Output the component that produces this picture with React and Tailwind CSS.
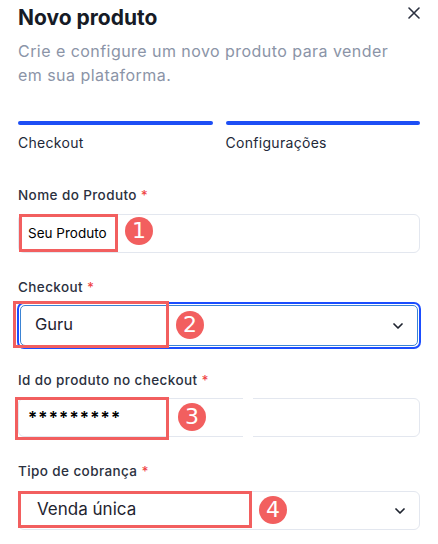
import { ChevronDown } from "lucide-react";

const FONT = { fontFamily: "Inter, 'Noto Sans', sans-serif" };

function Badge({ n, className }) {
  return (
    <div
      className={`absolute w-[28px] h-[28px] rounded-full bg-[#f25f5f] text-white flex items-center justify-center text-[22px] leading-none ${className}`}
      style={{ fontFamily: "'DejaVu Sans', sans-serif" }}
    >
      {n}
    </div>
  );
}

function Label({ children, className = "" }) {
  return (
    <div className={`text-[13.5px] font-medium text-[#2b3140] leading-[20px] tracking-[0.4px] ${className}`}>
      {children} <span className="text-[#ef4444]">*</span>
    </div>
  );
}

function Chevron() {
  return <ChevronDown className="w-[16px] h-[16px] text-[#1f2430]" strokeWidth={2.6} />;
}

export default function App() {
  return (
    <div className="w-[438px] h-[544px] overflow-hidden bg-white px-[18px]" style={FONT}>
      {/* Header */}
      <div className="flex items-start justify-between pt-[4px]">
        <h2 className="text-[21px] font-bold text-[#161b26] leading-[28px]">Novo produto</h2>
        <svg width="12" height="12" viewBox="0 0 12 12" className="mt-[3px]" fill="none">
          <path d="M1 1l10 10M11 1L1 11" stroke="#2b3140" strokeWidth="1.6" strokeLinecap="round" />
        </svg>
      </div>
      <p className="mt-[7px] text-[16px] leading-[24px] text-[#8b94a7] tracking-[0.45px] pr-[20px]">
        Crie e configure um novo produto para vender em sua plataforma.
      </p>

      {/* Steps */}
      <div className="grid grid-cols-2 gap-[13px] mt-[34px]">
        {["Checkout", "Configurações"].map((s) => (
          <div key={s} className="flex flex-col gap-[8px]">
            <div className="h-[4px] rounded-full bg-[#1d4ef5]" />
            <div className="text-[14px] text-[#222838] leading-[20px] tracking-[0.3px]">{s}</div>
          </div>
        ))}
      </div>

      {/* Nome do produto */}
      <Label className="mt-[32px]">Nome do Produto</Label>
      <div className="relative mt-[9px]">
        <div className="h-[39px] rounded-[6px] border border-[#e3e7ef] bg-white" />
        <div className="absolute left-[1px] top-0 w-[99px] h-[38px] border-[3px] border-[#f25f5f] flex items-center pl-[6px] text-[13.5px] text-black">
          Seu Produto
        </div>
        <Badge n="1" className="left-[107px] top-[3px]" />
      </div>

      {/* Checkout */}
      <Label className="mt-[24px]">Checkout</Label>
      <div className="relative mt-[5px]">
        <div className="h-[47px] rounded-[7px] border-2 border-[#1b4dff] -mx-[1px] p-[1px]">
          <div className="h-full rounded-[5px] border border-[#3b84d4] flex items-center justify-end pr-[11px]">
            <Chevron />
          </div>
        </div>
        <div className="absolute -left-[5px] -top-[1px] w-[156px] h-[47px] border-[3px] border-[#f25f5f] flex items-center pl-[19px] text-[16.5px] text-[#1f2430]">
          Guru
        </div>
        <Badge n="2" className="left-[158px] top-[9px]" />
      </div>

      {/* Id do produto */}
      <Label className="mt-[21px]">Id do produto no checkout</Label>
      <div className="relative mt-[8px]">
        <div className="h-[39px] rounded-[6px] border border-[#e3e7ef] bg-white" />
        <div className="absolute left-[225px] top-0 w-[10px] h-[39px] bg-white" />
        <div className="absolute -left-[3px] -top-[1px] w-[154px] h-[43px] border-[3px] border-[#f25f5f] flex items-center pl-[10px] text-[17px] font-semibold text-black tracking-[1.2px]">
          *********
        </div>
        <Badge n="3" className="left-[160px] top-[5px]" />
      </div>

      {/* Tipo de cobrança */}
      <Label className="mt-[24px]">Tipo de cobrança</Label>
      <div className="relative mt-[10px]">
        <div className="h-[39px] rounded-[6px] border border-[#e3e7ef] bg-white flex items-center justify-end pr-[11px]">
          <Chevron />
        </div>
        <div className="absolute left-0 top-0 w-[234px] h-[37px] border-[3px] border-[#f25f5f] flex items-center pl-[16px] text-[17px] text-[#1f2430]">
          Venda única
        </div>
        <Badge n="4" className="left-[241px] top-[5px]" />
      </div>
    </div>
  );
}
